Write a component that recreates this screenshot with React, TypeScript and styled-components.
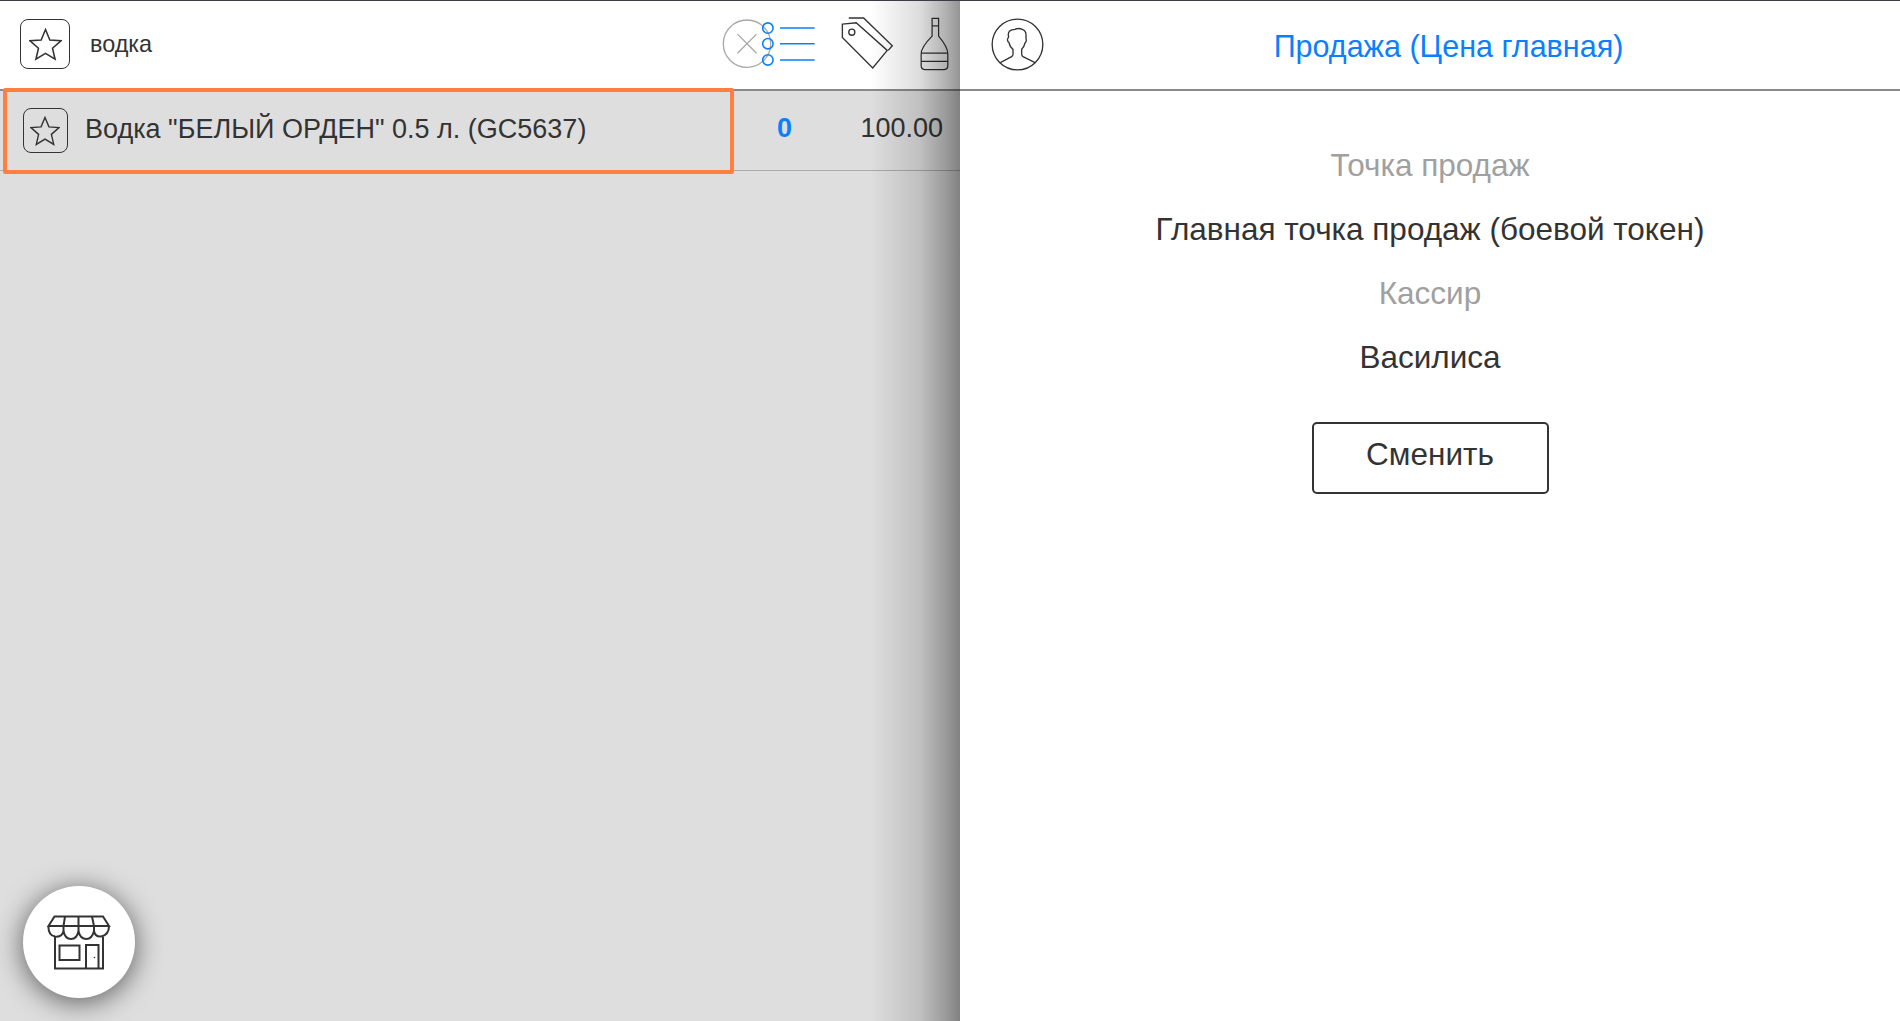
import styled, { createGlobalStyle } from "styled-components";

const GlobalStyle = createGlobalStyle`
	html, body {
		margin: 0;
		padding: 0;
		background: #fff;
	}
	* {
		box-sizing: border-box;
	}
`;

const BLUE = "#0a7fff";
const DARK = "#333";

const StarIcon = ({ size }: { size: number }) => (
	<svg width={size} height={size} viewBox="0 0 32 32" fill="none" stroke={DARK} strokeWidth="1.5" strokeLinejoin="miter">
		<polygon points="16,1.5 20.2,11.6 31,12.4 22.8,19.6 25.3,30.3 16,24.6 6.7,30.3 9.2,19.6 1,12.4 11.8,11.6" />
	</svg>
);

const ClearIcon = () => (
	<svg width="50" height="50" viewBox="126 52 152 152" fill="none" stroke="#a8a8a8" strokeWidth="4">
		<circle cx="202" cy="127" r="72" />
		<path d="M173 98 L231 156 M231 98 L173 156" />
	</svg>
);

const ListIcon = () => (
	<svg width="54" height="46" viewBox="250 68 156 130" fill="none" stroke={BLUE} strokeWidth="4.5">
		<circle cx="267" cy="87" r="15" />
		<circle cx="267" cy="132" r="15" />
		<circle cx="267" cy="179" r="15" />
		<path d="M302 87 H402 M302 132 H402 M302 179 H402" />
	</svg>
);

const TagIcon = () => (
	<svg width="54" height="56" viewBox="482 50 160 166" fill="none" stroke={DARK} strokeWidth="4">
		<path d="M489 74 L530 70 L622 152 L579 204 L489 114 Z" />
		<circle cx="517" cy="98" r="9" />
		<path d="M508 56 H552 L637 138 L625 152" />
	</svg>
);

const BottleIcon = () => (
	<svg width="31" height="54" viewBox="250 16 90 158" fill="none" stroke={DARK} strokeWidth="3.6">
		<path d="M288 20 H307 V72 Q335 105 334 125 V158 Q334 170 322 170 H268 Q256 170 256 158 V125 Q255 105 288 72 Z" />
		<path d="M288 42 H307" />
		<path d="M256 122 H334 M256 146 H334" />
	</svg>
);

const PersonIcon = () => (
	<svg width="53" height="53" viewBox="18 18 159 159" fill="none" stroke={DARK} strokeWidth="4">
		<circle cx="97.5" cy="97.5" r="76" />
		<path d="M46 152 L80 134 Q84 132 84 126 V112 Q75 106 72 92 Q66 88 68 80 L71 75 Q68 64 73 58 Q79 52 90 52 Q100 47 112 52 Q124 57 123 70 L123 80 Q126 88 120 93 Q117 106 110 112 V126 Q110 132 114 134 L150 152" />
	</svg>
);

const StoreIcon = () => (
	<svg width="64" height="55" viewBox="47 914 64 55" fill="none" stroke={DARK} strokeWidth="2">
		<path d="M54.5 915.5 H103 L109 925 H48.5 Z" />
		<path d="M48.5 925 Q48 934 55 935.5 Q62 936.5 63.5 930 Q65 938 71 938 Q77 938 78.5 930 Q80 938 86.5 938 Q92 938 94 930 Q95 936 101 935.5 Q109 934 109 925" />
		<path d="M65 915.5 L63.5 925 V930 M78.5 915.5 V930 M92 915.5 L94 925 V930" />
		<path d="M55 935.5 V967.5 H103 V935.5" />
		<rect x="59.5" y="944.5" width="20" height="14.5" />
		<path d="M86 967.5 V944 H98.5 V967.5" />
		<circle cx="94.5" cy="956.5" r="0.8" fill={DARK} stroke="none" />
	</svg>
);

const App = () => {
	return (
		<Page>
			<GlobalStyle />
			<LeftPanel>
				<Toolbar>
					<StarBox $size={50}>
						<StarIcon size={33} />
					</StarBox>
					<SearchText>водка</SearchText>
					<ToolIcons>
						<ClearIcon />
						<ListWrap>
							<ListIcon />
						</ListWrap>
						<TagWrap>
							<TagIcon />
						</TagWrap>
						<BottleWrap>
							<BottleIcon />
						</BottleWrap>
					</ToolIcons>
				</Toolbar>
				<ProductRow>
					<Highlight />
					<StarBox $size={45}>
						<StarIcon size={30} />
					</StarBox>
					<ProductName>Водка "БЕЛЫЙ ОРДЕН" 0.5 л. (GC5637)</ProductName>
					<Count>0</Count>
					<Price>100.00</Price>
				</ProductRow>
				<EdgeShade />
				<StoreButton>
					<StoreIcon />
				</StoreButton>
			</LeftPanel>
			<RightPanel>
				<RightHeader>
					<PersonIcon />
					<SaleTitle>Продажа (Цена главная)</SaleTitle>
				</RightHeader>
				<InfoBlock>
					<InfoLine $muted>Точка продаж</InfoLine>
					<InfoLine>Главная точка продаж (боевой токен)</InfoLine>
					<InfoLine $muted>Кассир</InfoLine>
					<InfoLine>Василиса</InfoLine>
					<ChangeButton>Сменить</ChangeButton>
				</InfoBlock>
			</RightPanel>
		</Page>
	);
};

export default App;

const Page = styled.div`
	display: flex;
	height: 100vh;
	overflow: hidden;
	border-top: 1px solid #3c3c44;
	font-family: "Liberation Sans", Arial, sans-serif;
	color: #333;
`;

const LeftPanel = styled.div`
	position: relative;
	width: 960px;
	flex-shrink: 0;
	background: #dedede;
	overflow: hidden;
`;

const Toolbar = styled.div`
	display: flex;
	align-items: center;
	height: 90px;
	padding: 0 0 2px 20px;
	background: #fff;
	border-bottom: 2px solid #8a8a8a;
`;

const StarBox = styled.div<{ $size: number }>`
	display: flex;
	align-items: center;
	justify-content: center;
	flex-shrink: 0;
	width: ${(props) => props.$size}px;
	height: ${(props) => props.$size}px;
	border: 1.5px solid ${DARK};
	border-radius: 8px;
`;

const SearchText = styled.span`
	margin-left: 20px;
	font-size: 23.4px;
`;

const ToolIcons = styled.div`
	display: flex;
	align-items: center;
	margin-left: auto;
	padding-right: 10px;
`;

const ListWrap = styled.div`
	display: flex;
	margin-left: -10px;
`;

const TagWrap = styled.div`
	display: flex;
	margin-left: 24px;
`;

const BottleWrap = styled.div`
	display: flex;
	margin-left: 25px;
`;

const ProductRow = styled.div`
	position: relative;
	display: flex;
	align-items: center;
	height: 80px;
	padding: 0 17px 0 22.5px;
	border-bottom: 1px solid #aaa;
`;

const Highlight = styled.div`
	position: absolute;
	top: -3px;
	left: 3px;
	width: 731px;
	height: 86px;
	border: 4px solid #ff7f3f;
	border-radius: 2px;
`;

const ProductName = styled.span`
	margin: 0 0 3px 17.5px;
	font-size: 27px;
`;

const Count = styled.span`
	margin: 0 0 4px auto;
	font-size: 27px;
	font-weight: 700;
	color: ${BLUE};
`;

const Price = styled.span`
	width: 151px;
	margin-bottom: 4px;
	text-align: right;
	font-size: 27px;
`;

const EdgeShade = styled.div`
	position: absolute;
	top: 0;
	right: 0;
	bottom: 0;
	width: 90px;
	background: linear-gradient(
		to right,
		rgba(0, 0, 0, 0),
		rgba(0, 0, 0, 0.135) 55%,
		rgba(0, 0, 0, 0.31) 85%,
		rgba(0, 0, 0, 0.42)
	);
	pointer-events: none;
`;

const StoreButton = styled.div`
	position: absolute;
	left: 23px;
	bottom: 23px;
	display: flex;
	align-items: center;
	justify-content: center;
	width: 112px;
	height: 112px;
	border-radius: 50%;
	background: #fff;
	box-shadow: 0 4px 28px rgba(0, 0, 0, 0.6);
`;

const RightPanel = styled.div`
	flex: 1;
	display: flex;
	flex-direction: column;
	background: #fff;
`;

const RightHeader = styled.div`
	display: flex;
	align-items: center;
	height: 90px;
	padding: 0 47px 2px 31px;
	border-bottom: 2px solid #8a8a8a;
`;

const SaleTitle = styled.span`
	flex: 1;
	margin-top: 4px;
	text-align: center;
	font-size: 30.5px;
	color: ${BLUE};
`;

const InfoBlock = styled.div`
	display: flex;
	flex-direction: column;
	align-items: center;
	padding-top: 42px;
`;

const InfoLine = styled.div<{ $muted?: boolean }>`
	height: 64px;
	line-height: 64px;
	font-size: 31.5px;
	color: ${(props) => (props.$muted ? "#a0a0a0" : "#333")};
`;

const ChangeButton = styled.button`
	width: 237px;
	height: 72px;
	margin-top: 33px;
	padding: 0 0 8px;
	background: #fff;
	border: 2px solid #333;
	border-radius: 5px;
	font-family: inherit;
	font-size: 31.5px;
	color: #333;
`;
